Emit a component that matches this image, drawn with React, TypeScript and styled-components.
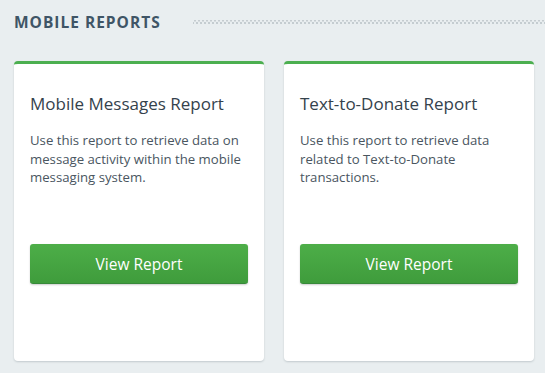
import styled, { createGlobalStyle } from 'styled-components';

const GlobalStyle = createGlobalStyle`
  html, body {
    margin: 0;
    padding: 0;
    background: #e9eef0;
    font-family: 'Open Sans', 'Liberation Sans', sans-serif;
  }
`;

const reports = [
  {
    title: 'Mobile Messages Report',
    description:
      'Use this report to retrieve data on message activity within the mobile messaging system.',
  },
  {
    title: 'Text-to-Donate Report',
    description:
      'Use this report to retrieve data related to Text-to-Donate transactions.',
  },
];

export default function App() {
  return (
    <>
      <GlobalStyle />
      <Page>
        <SectionHeader>
          <SectionTitle>Mobile Reports</SectionTitle>
          <DottedRule />
        </SectionHeader>
        <CardGrid>
          {reports.map((report) => (
            <Card key={report.title}>
              <CardTitle>{report.title}</CardTitle>
              <CardText>{report.description}</CardText>
              <ViewButton type='button'>View Report</ViewButton>
            </Card>
          ))}
        </CardGrid>
      </Page>
    </>
  );
}

const Page = styled.div`
  width: 545px;
  height: 373px;
  padding: 15px 0 0 14px;
  box-sizing: border-box;
  overflow: hidden;
`;

const SectionHeader = styled.div`
  display: flex;
  align-items: center;
  gap: 32px;
  height: 14px;
`;

const SectionTitle = styled.h2`
  margin: 0;
  font-size: 15.5px;
  font-weight: 700;
  letter-spacing: 1px;
  text-transform: uppercase;
  color: #3f5566;
  white-space: nowrap;
`;

const DottedRule = styled.div`
  flex: 1;
  height: 5px;
  background-image: radial-gradient(circle, #9aa5ab 0.6px, transparent 0.8px),
    radial-gradient(circle, #9aa5ab 0.6px, transparent 0.8px);
  background-size: 4px 4px;
  background-position: 0 -1.5px, 2px 1.5px;
  background-repeat: repeat-x;
`;

const CardGrid = styled.div`
  display: flex;
  gap: 20px;
  margin-top: 32px;
`;

const Card = styled.div`
  display: flex;
  flex-direction: column;
  width: 250px;
  height: 300px;
  box-sizing: border-box;
  padding: 28px 16px 0;
  background: #fff;
  border-top: 3px solid #4caf50;
  border-radius: 4px;
  box-shadow: 0 1px 2px rgba(40, 60, 70, 0.2);
`;

const CardTitle = styled.h3`
  margin: 0;
  font-size: 17px;
  font-weight: 400;
  line-height: 24px;
  color: #34424c;
`;

const CardText = styled.p`
  margin: 15px 0 0;
  height: 56px;
  font-size: 13.2px;
  line-height: 18.5px;
  color: #4a565f;
`;

const ViewButton = styled.button`
  margin-top: 57px;
  width: 100%;
  height: 40px;
  border: none;
  border-bottom: 1px solid #37893a;
  border-radius: 3px;
  background: linear-gradient(#4dae48, #3f9c3c);
  box-shadow: 0 1px 2px rgba(0, 0, 0, 0.2);
  color: #fff;
  font-family: inherit;
  font-size: 15.5px;
  font-weight: 500;
  cursor: pointer;
`;
